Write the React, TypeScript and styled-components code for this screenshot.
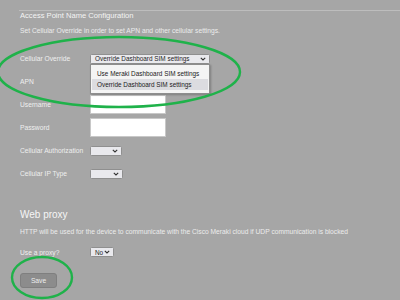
import styled, { createGlobalStyle } from "styled-components";

const GlobalStyle = createGlobalStyle`
  html, body {
    margin: 0;
    padding: 0;
    background: #a6a6a6;
  }
  body {
    font-family: "Liberation Sans", Arial, sans-serif;
  }
`;

const Chevron = () => (
  <svg width="6" height="4" viewBox="0 0 6 4">
    <polyline points="0.8,0.8 3,3 5.2,0.8" fill="none" stroke="#333" strokeWidth="1.1" />
  </svg>
);

const fields = [
  { label: "APN", kind: "text" },
  { label: "Username", kind: "text" },
  { label: "Password", kind: "text" },
  { label: "Cellular Authorization", kind: "select", width: 32 },
  { label: "Cellular IP Type", kind: "select", width: 33 },
];

const App = () => {
  return (
    <Page>
      <GlobalStyle />
      <Section>
        <Title>Access Point Name Configuration</Title>
        <Description>
          Set Cellular Override in order to set APN and other cellular settings.
        </Description>
        <Form>
          <Row>
            <Label>Cellular Override</Label>
            <SelectWrap>
              <SelectBox $width={120}>
                <span>Override Dashboard SIM settings</span>
                <Chevron />
              </SelectBox>
              <Dropdown>
                <Option>Use Meraki Dashboard SIM settings</Option>
                <Option $active>Override Dashboard SIM settings</Option>
              </Dropdown>
            </SelectWrap>
          </Row>
          {fields.map((f) => (
            <Row key={f.label}>
              <Label>{f.label}</Label>
              {f.kind === "text" ? (
                <TextInput />
              ) : (
                <SelectBox $width={f.width || 32}>
                  <span />
                  <Chevron />
                </SelectBox>
              )}
            </Row>
          ))}
        </Form>

        <SubTitle>Web proxy</SubTitle>
        <Description $tight>
          HTTP will be used for the device to communicate with the Cisco Meraki cloud if UDP
          communication is blocked
        </Description>
        <Row $first>
          <Label>Use a proxy?</Label>
          <SelectBox $width={24}>
            <span>No</span>
            <Chevron />
          </SelectBox>
        </Row>
        <SaveButton type="button">Save</SaveButton>
      </Section>

      <Annotations width="400" height="300" viewBox="0 0 400 300">
        <ellipse cx="119" cy="72" rx="121" ry="35" fill="none" stroke="#1fb24a" strokeWidth="2.4" />
        <ellipse cx="42" cy="277.5" rx="30" ry="20.5" fill="none" stroke="#1fb24a" strokeWidth="2.4" />
      </Annotations>
    </Page>
  );
};

const Page = styled.div`
  position: relative;
  width: 400px;
  height: 300px;
  overflow: hidden;
  background: #a6a6a6;
  padding-top: 10px;
  padding-left: 19px;
  box-sizing: border-box;
`;

const Section = styled.div`
  border-top: 1px solid #bdbdbd;
  display: flex;
  flex-direction: column;
  align-items: flex-start;
`;

const Title = styled.h3`
  margin: 0;
  padding-left: 1px;
  font-size: 7.6px;
  line-height: 10px;
  font-weight: normal;
  color: #f4f4f4;
  white-space: nowrap;
`;

const Description = styled.p<{ $tight?: boolean }>`
  margin: ${(p) => (p.$tight ? "6px 0 0" : "5px 0 0")};
  padding-left: 1px;
  font-size: 6.7px;
  line-height: 10px;
  color: #ececec;
  white-space: nowrap;
`;

const Form = styled.div`
  margin-top: 11px;
  display: flex;
  flex-direction: column;
`;

const Row = styled.div<{ $first?: boolean }>`
  display: grid;
  grid-template-columns: 71px auto;
  align-items: center;
  height: 23px;
  margin-top: ${(p) => (p.$first ? "3.5px" : "0")};
`;

const Label = styled.label`
  padding-left: 1px;
  font-size: 6.7px;
  color: #efefef;
  white-space: nowrap;
`;

const SelectWrap = styled.div`
  position: relative;
`;

const SelectBox = styled.div<{ $width: number }>`
  width: ${(p) => p.$width}px;
  height: 10px;
  box-sizing: border-box;
  display: flex;
  align-items: center;
  justify-content: space-between;
  padding: 0 3px 0 4px;
  background: #e9e9ed;
  border: 1px solid #8f8f8f;
  border-radius: 1.5px;
  font-size: 6.4px;
  color: #1e1e1e;
  white-space: nowrap;

  svg {
    flex-shrink: 0;
  }
`;

const Dropdown = styled.div`
  position: absolute;
  left: 0;
  top: 10px;
  width: 120px;
  box-sizing: border-box;
  padding: 3px 1px 3px;
  background: #f4f4f4;
  border: 1px solid #8d8d8d;
  box-shadow: 1px 1px 2px rgba(0, 0, 0, 0.25);
  z-index: 2;
`;

const Option = styled.div<{ $active?: boolean }>`
  height: 11px;
  line-height: 11px;
  padding-left: 5px;
  font-size: 6.4px;
  color: #222;
  background: ${(p) => (p.$active ? "#dcdce0" : "transparent")};
  white-space: nowrap;
`;

const TextInput = styled.input`
  width: 76px;
  height: 19px;
  box-sizing: border-box;
  margin: 0;
  background: #ffffff;
  border: 1px solid #c8c8c8;
  padding: 0 3px;
`;

const SubTitle = styled.h2`
  margin: 24px 0 0;
  padding-left: 1px;
  font-size: 10px;
  line-height: 12px;
  font-weight: normal;
  color: #f6f6f6;
`;

const SaveButton = styled.button`
  margin-top: 9.5px;
  margin-left: 1px;
  width: 37px;
  height: 15px;
  padding: 0;
  border: 1px solid #7f7f7f;
  border-radius: 3px;
  background: #8c8c8c;
  color: #ececec;
  font-family: "Liberation Sans", Arial, sans-serif;
  font-size: 6.7px;
`;

const Annotations = styled.svg`
  position: absolute;
  left: 0;
  top: 0;
  pointer-events: none;
  z-index: 3;
`;

export default App;
